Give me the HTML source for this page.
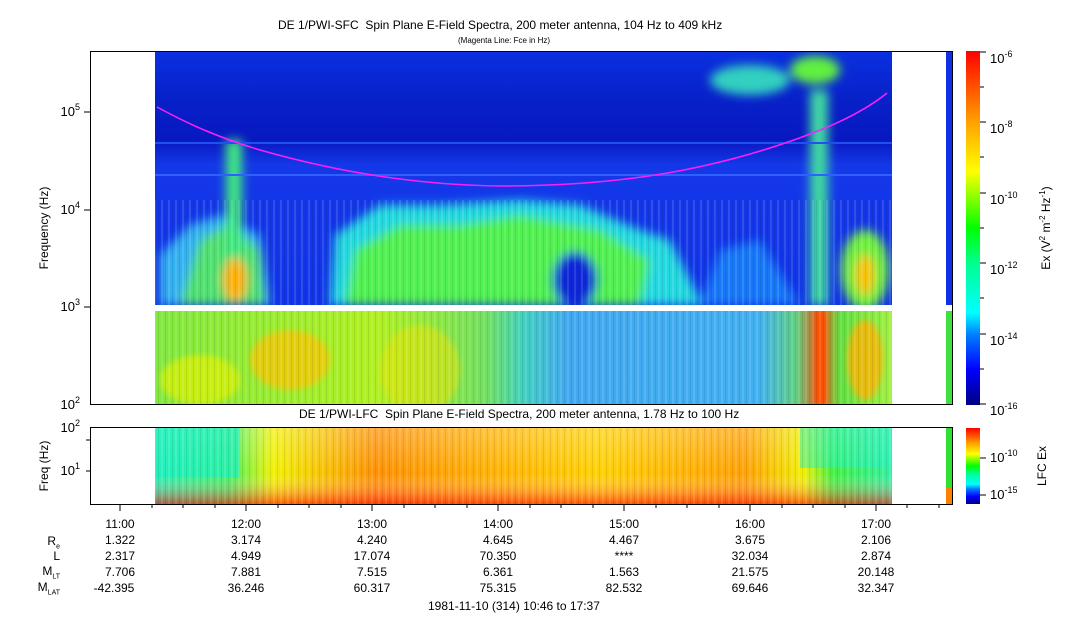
<!DOCTYPE html>
<html><head><meta charset="utf-8"><style>
body{margin:0;background:#fff;width:1083px;height:620px;overflow:hidden;position:relative;font-family:"Liberation Sans",Arial,sans-serif;color:#000}
.t{position:absolute;font-size:12px;white-space:nowrap}
.r{text-align:right}
.c{text-align:center;transform:translateX(-50%)}
sub{font-size:7px}
</style></head><body>
<div class="t" style="left:278px;top:18px">DE 1/PWI-SFC&nbsp; Spin Plane E-Field Spectra, 200 meter antenna, 104 Hz to 409 kHz</div>
<div class="t" style="left:458px;top:36px;font-size:8px">(Magenta Line: Fce in Hz)</div>

<svg width="1083" height="620" style="position:absolute;left:0;top:0">
<defs>
<filter id="b" x="-50%" y="-50%" width="200%" height="200%"><feGaussianBlur stdDeviation="5"/></filter>
<filter id="b2" x="-50%" y="-50%" width="200%" height="200%"><feGaussianBlur stdDeviation="3"/></filter>
<linearGradient id="up" x1="0" y1="0" x2="0" y2="1">
<stop offset="0" stop-color="#0a30e0"/><stop offset="0.2" stop-color="#0820c8"/><stop offset="0.35" stop-color="#0818c0"/><stop offset="0.45" stop-color="#1438e8"/><stop offset="1" stop-color="#1034e8"/></linearGradient>
<linearGradient id="cb" x1="0" y1="1" x2="0" y2="0">
<stop offset="0" stop-color="#000080"/><stop offset="0.1" stop-color="#0000ff"/><stop offset="0.2" stop-color="#0080ff"/><stop offset="0.26" stop-color="#00ffff"/><stop offset="0.4" stop-color="#00ff90"/><stop offset="0.5" stop-color="#00ff00"/><stop offset="0.6" stop-color="#a0ff00"/><stop offset="0.66" stop-color="#ffff00"/><stop offset="0.8" stop-color="#ffa000"/><stop offset="1" stop-color="#ff0000"/></linearGradient>
<linearGradient id="lo" x1="0" y1="0" x2="1" y2="0">
<stop offset="0" stop-color="#80e840"/><stop offset="0.3" stop-color="#b0f020"/><stop offset="0.45" stop-color="#70e060"/><stop offset="0.5" stop-color="#40d0c0"/><stop offset="0.56" stop-color="#40a8f0"/><stop offset="0.82" stop-color="#40b0f0"/><stop offset="0.87" stop-color="#60d080"/><stop offset="0.9" stop-color="#e06020"/><stop offset="0.93" stop-color="#60e040"/><stop offset="1" stop-color="#a0f040"/></linearGradient>
<linearGradient id="lf" x1="0" y1="0" x2="1" y2="0">
<stop offset="0" stop-color="#20f0b0"/><stop offset="0.1" stop-color="#40f060"/><stop offset="0.16" stop-color="#f0f000"/><stop offset="0.3" stop-color="#ff9000"/><stop offset="0.45" stop-color="#ffb000"/><stop offset="0.6" stop-color="#ffd000"/><stop offset="0.8" stop-color="#ffa000"/><stop offset="0.88" stop-color="#f0f000"/><stop offset="0.92" stop-color="#40f040"/><stop offset="1" stop-color="#30f0a0"/></linearGradient>
<linearGradient id="lfv" x1="0" y1="0" x2="0" y2="1">
<stop offset="0" stop-color="#fff" stop-opacity="0.25"/><stop offset="0.6" stop-color="#fff" stop-opacity="0"/><stop offset="1" stop-color="#ff0000" stop-opacity="0.6"/></linearGradient>
<pattern id="st" width="7" height="10" patternUnits="userSpaceOnUse"><rect x="0" y="0" width="2" height="10" fill="#fff" opacity="0.12"/><rect x="4" y="0" width="1" height="10" fill="#000" opacity="0.08"/></pattern>
<clipPath id="cu"><rect x="155" y="51" width="737" height="254"/></clipPath>
<clipPath id="cl"><rect x="155" y="311" width="737" height="94"/></clipPath>
</defs>
<rect x="155" y="51" width="737" height="254" fill="url(#up)"/>
<g clip-path="url(#cu)">
<g filter="url(#b)">
<polygon points="160,305 160,255 190,225 220,215 260,235 270,305" fill="#30b0f0"/>
<polygon points="180,305 200,240 228,225 260,250 265,305" fill="#50e070"/>
<rect x="226" y="140" width="16" height="120" fill="#40e880"/>
<ellipse cx="235" cy="280" rx="12" ry="22" fill="#ffb000"/>
<polygon points="330,305 335,235 380,205 440,205 520,200 580,205 640,230 670,240 700,300 700,305" fill="#20d8e0"/>
<polygon points="345,305 355,250 400,225 460,225 520,215 600,230 650,260 640,305" fill="#50f050"/>
<ellipse cx="575" cy="280" rx="22" ry="28" fill="#0a28d8"/>
<polygon points="700,305 720,250 760,240 800,305" fill="#1878f8"/>
<ellipse cx="750" cy="80" rx="40" ry="15" fill="#30d0c0"/>
<ellipse cx="815" cy="70" rx="25" ry="14" fill="#60f040"/>
<rect x="810" y="90" width="18" height="215" fill="#40d8a0"/>
<ellipse cx="865" cy="270" rx="24" ry="40" fill="#70f040"/>
<ellipse cx="865" cy="275" rx="9" ry="20" fill="#ffc000"/>
</g>
<rect x="155" y="200" width="737" height="105" fill="url(#st)"/>
<line x1="155" y1="175" x2="892" y2="175" stroke="#3060ff" stroke-width="2"/>
<line x1="155" y1="143" x2="892" y2="143" stroke="#2050f0" stroke-width="2"/>
</g>
<path d="M157,107 C190,125 220,138 260,150 C330,170 410,185 500,186 C620,186 700,170 770,148 C820,132 860,115 887,93" fill="none" stroke="#ff20ff" stroke-width="1.5"/>
<rect x="155" y="311" width="737" height="94" fill="url(#lo)"/>
<g clip-path="url(#cl)">
<g filter="url(#b2)">
<ellipse cx="290" cy="360" rx="40" ry="30" fill="#ffc000" opacity="0.7"/>
<ellipse cx="200" cy="380" rx="40" ry="25" fill="#e0f000" opacity="0.7"/>
<ellipse cx="420" cy="370" rx="40" ry="45" fill="#f0e000" opacity="0.5"/>
<rect x="815" y="311" width="12" height="94" fill="#ff5000"/>
<ellipse cx="865" cy="360" rx="18" ry="40" fill="#ffb000" opacity="0.8"/>
</g>
<rect x="155" y="311" width="737" height="94" fill="url(#st)"/>
</g>
<rect x="946" y="51" width="7" height="254" fill="#1030e8"/>
<rect x="946" y="311" width="7" height="94" fill="#40e040"/>
<rect x="155" y="428" width="737" height="76" fill="url(#lf)"/>
<rect x="155" y="428" width="737" height="76" fill="url(#lfv)"/>
<rect x="155" y="428" width="85" height="50" fill="#20f0c0" opacity="0.7"/>
<rect x="800" y="428" width="92" height="40" fill="#20f0c0" opacity="0.5"/>
<rect x="155" y="428" width="737" height="76" fill="url(#st)"/>
<rect x="946" y="428" width="7" height="76" fill="#30e030"/>
<rect x="946" y="488" width="7" height="16" fill="#ff8000"/>
<rect x="90.5" y="51.5" width="862" height="353" fill="none" stroke="#000"/>
<rect x="90.5" y="427.5" width="862" height="77" fill="none" stroke="#000"/>
<rect x="966" y="51" width="14" height="354" fill="url(#cb)"/>
<rect x="966" y="428" width="14" height="76" fill="url(#cb)"/>
<g stroke="#000">
<line x1="84" y1="112" x2="90" y2="112"/><line x1="84" y1="210" x2="90" y2="210"/><line x1="84" y1="307" x2="90" y2="307"/>
<line x1="86" y1="440" x2="90" y2="440"/><line x1="86" y1="471" x2="90" y2="471"/>
<line x1="120" y1="505" x2="120" y2="511"/><line x1="246" y1="505" x2="246" y2="511"/><line x1="372" y1="505" x2="372" y2="511"/><line x1="498" y1="505" x2="498" y2="511"/><line x1="624" y1="505" x2="624" y2="511"/><line x1="750" y1="505" x2="750" y2="511"/><line x1="876" y1="505" x2="876" y2="511"/>
<line x1="152" y1="505" x2="152" y2="508"/><line x1="183" y1="505" x2="183" y2="508"/><line x1="215" y1="505" x2="215" y2="508"/>
<line x1="278" y1="505" x2="278" y2="508"/><line x1="309" y1="505" x2="309" y2="508"/><line x1="341" y1="505" x2="341" y2="508"/>
<line x1="404" y1="505" x2="404" y2="508"/><line x1="435" y1="505" x2="435" y2="508"/><line x1="467" y1="505" x2="467" y2="508"/>
<line x1="530" y1="505" x2="530" y2="508"/><line x1="561" y1="505" x2="561" y2="508"/><line x1="593" y1="505" x2="593" y2="508"/>
<line x1="656" y1="505" x2="656" y2="508"/><line x1="687" y1="505" x2="687" y2="508"/><line x1="719" y1="505" x2="719" y2="508"/>
<line x1="782" y1="505" x2="782" y2="508"/><line x1="813" y1="505" x2="813" y2="508"/><line x1="845" y1="505" x2="845" y2="508"/>
<line x1="907" y1="505" x2="907" y2="508"/><line x1="939" y1="505" x2="939" y2="508"/>
<line x1="980" y1="52" x2="986" y2="52"/><line x1="980" y1="87" x2="984" y2="87"/><line x1="980" y1="122" x2="986" y2="122"/><line x1="980" y1="157" x2="984" y2="157"/><line x1="980" y1="193" x2="986" y2="193"/><line x1="980" y1="228" x2="984" y2="228"/><line x1="980" y1="263" x2="986" y2="263"/><line x1="980" y1="298" x2="984" y2="298"/><line x1="980" y1="334" x2="986" y2="334"/><line x1="980" y1="369" x2="984" y2="369"/><line x1="980" y1="404" x2="986" y2="404"/>
<line x1="980" y1="458" x2="986" y2="458"/><line x1="980" y1="495" x2="986" y2="495"/>
</g>
<g font-size="13" font-family="Liberation Sans" text-anchor="end">
<text x="80" y="116">10<tspan font-size="9" dy="-6">5</tspan></text>
<text x="80" y="214">10<tspan font-size="9" dy="-6">4</tspan></text>
<text x="80" y="311">10<tspan font-size="9" dy="-6">3</tspan></text>
<text x="80" y="409">10<tspan font-size="9" dy="-6">2</tspan></text>
<text x="80" y="432">10<tspan font-size="9" dy="-6">2</tspan></text>
<text x="80" y="475">10<tspan font-size="9" dy="-6">1</tspan></text>
</g>
<text transform="translate(48,228) rotate(-90)" font-size="12" text-anchor="middle" font-family="Liberation Sans">Frequency (Hz)</text>
<text transform="translate(48,466) rotate(-90)" font-size="12" text-anchor="middle" font-family="Liberation Sans">Freq (Hz)</text>
<g font-size="13" font-family="Liberation Sans">
<text x="990" y="63">10<tspan font-size="9" dy="-6">-6</tspan></text>
<text x="990" y="133">10<tspan font-size="9" dy="-6">-8</tspan></text>
<text x="990" y="204">10<tspan font-size="9" dy="-6">-10</tspan></text>
<text x="990" y="274">10<tspan font-size="9" dy="-6">-12</tspan></text>
<text x="990" y="345">10<tspan font-size="9" dy="-6">-14</tspan></text>
<text x="990" y="415">10<tspan font-size="9" dy="-6">-16</tspan></text>
<text x="990" y="462">10<tspan font-size="9" dy="-6">-10</tspan></text>
<text x="990" y="499">10<tspan font-size="9" dy="-6">-15</tspan></text>
</g>
<text transform="translate(1050,228) rotate(-90)" font-size="12" text-anchor="middle" font-family="Liberation Sans">Ex (V<tspan font-size="8" dy="-5">2</tspan><tspan dy="5"> m</tspan><tspan font-size="8" dy="-5">-2</tspan><tspan dy="5"> Hz</tspan><tspan font-size="8" dy="-5">-1</tspan><tspan dy="5">)</tspan></text>
<text transform="translate(1046,466) rotate(-90)" font-size="12" text-anchor="middle" font-family="Liberation Sans">LFC Ex</text>
</svg>
<div class="t" style="left:299px;top:407px">DE 1/PWI-LFC&nbsp; Spin Plane E-Field Spectra, 200 meter antenna, 1.78 Hz to 100 Hz</div>

<div class="t r" style="left:20px;width:40px;top:534px">R<sub>e</sub></div>
<div class="t r" style="left:20px;width:40px;top:549px">L</div>
<div class="t r" style="left:20px;width:40px;top:564px">M<sub>LT</sub></div>
<div class="t r" style="left:20px;width:40px;top:580px">M<sub>LAT</sub></div>
<div class="t" style="left:0;top:517px;width:1083px">
<span class="t c" style="left:120px">11:00</span><span class="t c" style="left:246px">12:00</span><span class="t c" style="left:372px">13:00</span><span class="t c" style="left:498px">14:00</span><span class="t c" style="left:624px">15:00</span><span class="t c" style="left:750px">16:00</span><span class="t c" style="left:876px">17:00</span></div>
<div class="t" style="left:0;top:533px;width:1083px">
<span class="t c" style="left:120px">1.322</span><span class="t c" style="left:246px">3.174</span><span class="t c" style="left:372px">4.240</span><span class="t c" style="left:498px">4.645</span><span class="t c" style="left:624px">4.467</span><span class="t c" style="left:750px">3.675</span><span class="t c" style="left:876px">2.106</span></div>
<div class="t" style="left:0;top:549px;width:1083px">
<span class="t c" style="left:120px">2.317</span><span class="t c" style="left:246px">4.949</span><span class="t c" style="left:372px">17.074</span><span class="t c" style="left:498px">70.350</span><span class="t c" style="left:624px">****</span><span class="t c" style="left:750px">32.034</span><span class="t c" style="left:876px">2.874</span></div>
<div class="t" style="left:0;top:565px;width:1083px">
<span class="t c" style="left:120px">7.706</span><span class="t c" style="left:246px">7.881</span><span class="t c" style="left:372px">7.515</span><span class="t c" style="left:498px">6.361</span><span class="t c" style="left:624px">1.563</span><span class="t c" style="left:750px">21.575</span><span class="t c" style="left:876px">20.148</span></div>
<div class="t" style="left:0;top:581px;width:1083px">
<span class="t c" style="left:114px">-42.395</span><span class="t c" style="left:246px">36.246</span><span class="t c" style="left:372px">60.317</span><span class="t c" style="left:498px">75.315</span><span class="t c" style="left:624px">82.532</span><span class="t c" style="left:750px">69.646</span><span class="t c" style="left:876px">32.347</span></div>
<div class="t" style="left:428px;top:599px">1981-11-10 (314) 10:46 to 17:37</div>
</body></html>
